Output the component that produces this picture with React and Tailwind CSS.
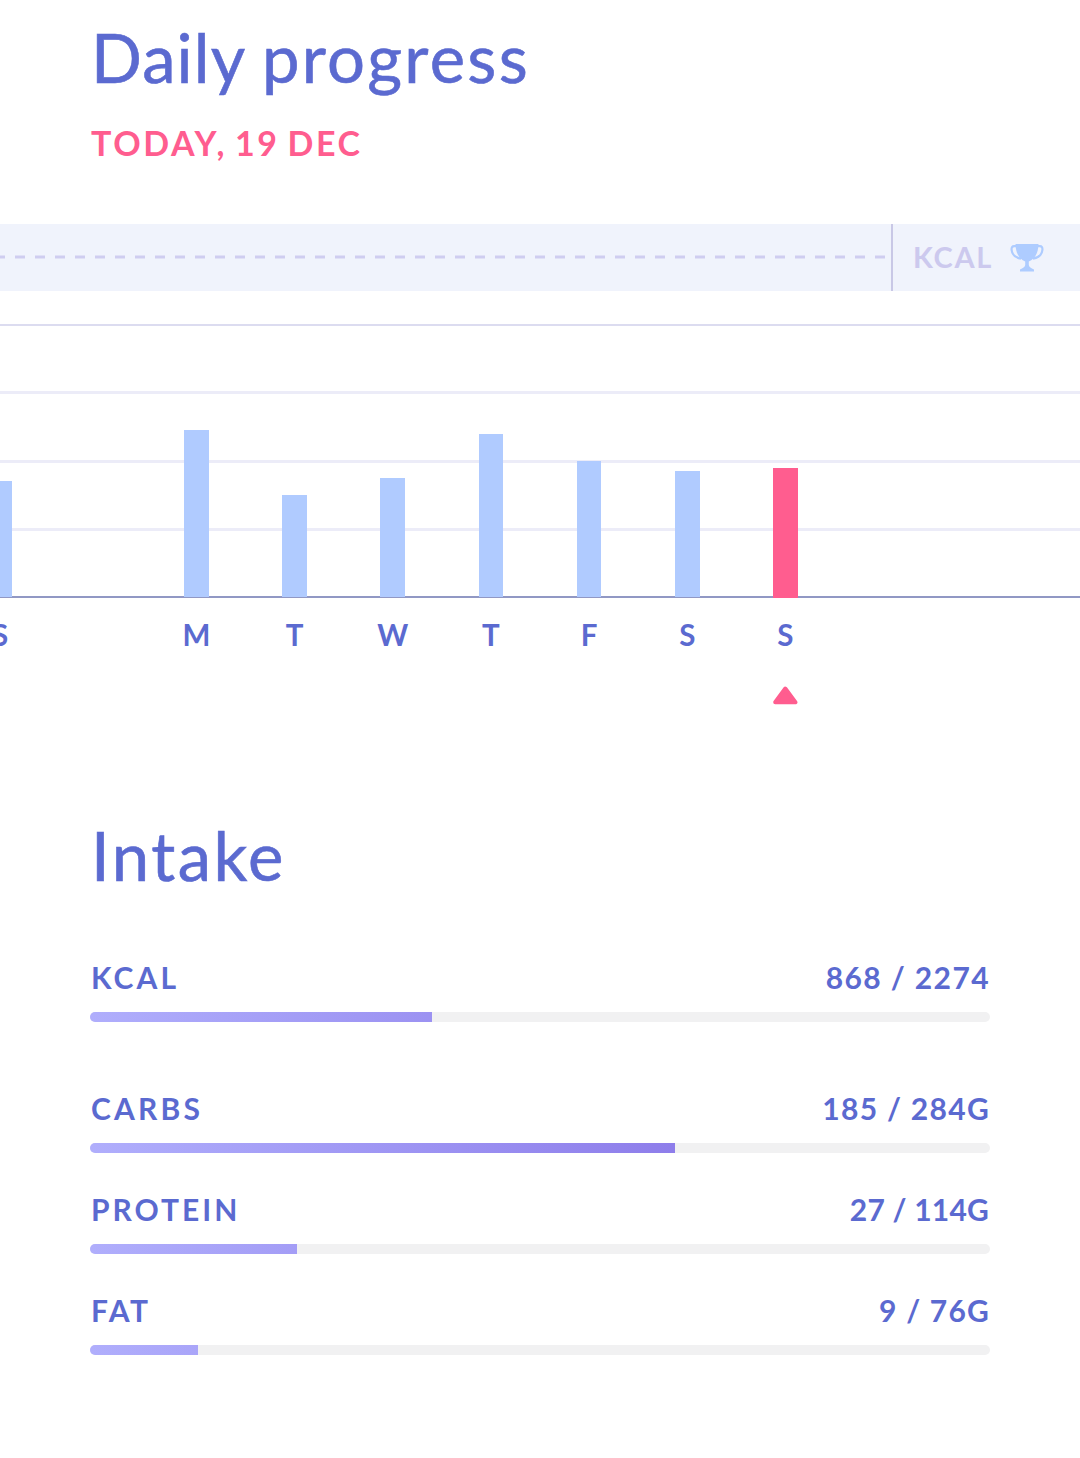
import React from 'react';

// one slot per day, null is the gap between two weeks
const days = [
  { label: 'S', height: 116 },
  null,
  { label: 'M', height: 167 },
  { label: 'T', height: 102 },
  { label: 'W', height: 119 },
  { label: 'T', height: 163 },
  { label: 'F', height: 136 },
  { label: 'S', height: 126 },
  { label: 'S', height: 130, today: true },
];

const intake = [
  { name: 'KCAL', value: '868 / 2274', percent: 38, nameClass: 'tracking-[3.1px]', valueClass: 'tracking-[1.4px]', rowClass: 'mb-[70px]' },
  { name: 'CARBS', value: '185 / 284G', percent: 65, nameClass: 'tracking-[3.2px]', valueClass: 'tracking-[1.3px]', rowClass: 'mb-[40px]' },
  { name: 'PROTEIN', value: '27 / 114G', percent: 23, nameClass: 'tracking-[3px]', valueClass: 'mr-px tracking-[0.2px]', rowClass: 'mb-[40px]' },
  { name: 'FAT', value: '9 / 76G', percent: 12, nameClass: 'tracking-[2.6px]', valueClass: 'tracking-[1.2px]', rowClass: '' },
];

function Trophy() {
  return (
    <svg className="ml-[17px] mt-[2px] shrink-0" width="34" height="29" viewBox="0 0 34 29">
      <path d="M7 3.2H4.2C2.2 3.2 1.4 4.6 1.6 6.8C2 11 5.2 14.6 11 15.6M27 3.2H29.8C31.8 3.2 32.6 4.6 32.4 6.8C32 11 28.8 14.6 23 15.6" fill="none" stroke="#aeccff" strokeWidth="2.2" />
      <path d="M5.5 1H28.5C28.3 10 25 15.8 18.8 18.6V22C19.2 24 21 25.4 24 26.4V28.4H10V26.4C13 25.4 14.8 24 15.2 22V18.6C9 15.8 5.7 10 5.5 1Z" fill="#aeccff" />
    </svg>
  );
}

function Chart() {
  return (
    <div className="w-full overflow-hidden">
      <div className="grid h-[274px] w-full">
        {/* grid lines */}
        <div className="col-start-1 row-start-1 flex flex-col justify-between">
          <div className="h-[2px] bg-[#dcdcf0]"></div>
          <div className="h-[3px] bg-[#ececf8]"></div>
          <div className="h-[3px] bg-[#ececf8]"></div>
          <div className="h-[3px] bg-[#ececf8]"></div>
          <div className="h-[2px] bg-[#9198c4]"></div>
        </div>
        {/* bars */}
        <div className="col-start-1 row-start-1 -ml-[49.1px] grid w-[1178.2px] grid-cols-12 items-end">
          {days.map((day, i) => (
            <div key={i} className={`flex justify-center ${day?.today ? '' : 'pb-px'}`}>
              {day && (
                <div
                  className={`w-[24.6px] ${day.today ? 'bg-[#ff5d8f]' : 'bg-[#b0cbff]'}`}
                  style={{ height: day.height }}
                ></div>
              )}
            </div>
          ))}
        </div>
      </div>

      {/* day labels */}
      <div className="-ml-[49.1px] mt-[17px] grid w-[1178.2px] grid-cols-12">
        {days.map((day, i) => (
          <div key={i} className="flex flex-col items-center text-[29.5px] font-bold leading-[40px] text-[#5b6ad0]">
            {day?.label}
            {day?.today && (
              <svg className="mt-[30px]" width="26" height="20" viewBox="0 0 26 20">
                <path d="M13.3 3.5L23.4 17.3H3.2Z" fill="#ff5d8f" stroke="#ff5d8f" strokeWidth="4" strokeLinejoin="round" />
              </svg>
            )}
          </div>
        ))}
      </div>
    </div>
  );
}

export default function App() {
  return (
    <div className="flex h-[1458px] w-[1080px] flex-col overflow-hidden bg-white font-['Lato',sans-serif] text-[#5b6ad0]">
      <header className="flex h-[224px] shrink-0 flex-col items-start px-[91px] pt-[17px]">
        <h1 className="text-[67px] leading-[80px] tracking-[1.1px] [-webkit-text-stroke:0.6px]">
          Daily <span className="-ml-px tracking-[2.3px]">progress</span>
        </h1>
        <p className="mt-[26px] text-[34px] font-bold leading-[40px] tracking-[2.6px] [word-spacing:-3px] text-[#ff5d8f]">TODAY, 19 DEC</p>
      </header>

      {/* goal band */}
      <div className="mb-[33px] flex h-[67px] shrink-0 items-center bg-[#f0f3fc] pb-[2px]">
        <svg className="shrink-0" width="891" height="4" viewBox="0 0 891 4">
          <path d="M-5 2H886" stroke="#cfcdf0" strokeWidth="3" strokeDasharray="10 10" />
        </svg>
        <div className="-mb-[2px] w-[2px] shrink-0 self-stretch bg-[#c9c8e6]"></div>
        <span className="ml-[20px] text-[29px] font-bold leading-[40px] tracking-[1.7px] text-[#ccc9ee]">KCAL</span>
        <Trophy />
      </div>

      <Chart />

      <section className="mt-[110px] px-[90px]">
        <h2 className="pl-px text-[67px] leading-[80px] tracking-[2.5px] [-webkit-text-stroke:0.6px]">Intake</h2>
        <div className="mt-[66px] flex flex-col">
          {intake.map((row) => (
            <div key={row.name} className={row.rowClass}>
              <div className="flex h-[33px] items-center justify-between pl-px text-[30px] font-bold leading-[33px]">
                <span className={row.nameClass}>{row.name}</span>
                <span className={row.valueClass}>{row.value}</span>
              </div>
              <div className="mt-[18px] h-[10px] overflow-hidden rounded-full bg-[#f1f1f2]">
                <div className="h-full overflow-hidden" style={{ width: `${row.percent}%` }}>
                  <div className="h-full w-[900px] bg-linear-to-r from-[#b0aefc] to-[#7d62e0]"></div>
                </div>
              </div>
            </div>
          ))}
        </div>
      </section>
    </div>
  );
}
